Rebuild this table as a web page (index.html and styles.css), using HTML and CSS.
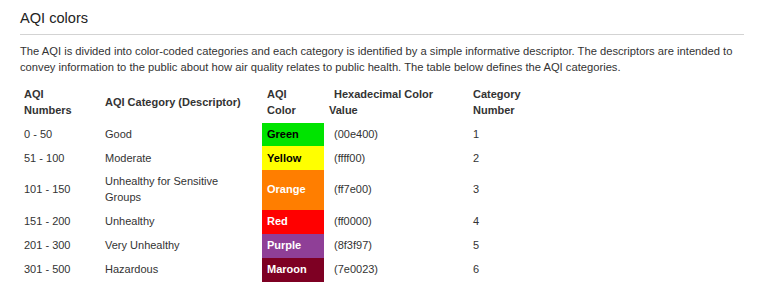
FILE: index.html
```html
<!DOCTYPE html>
<html lang="en">
<head>
<meta charset="utf-8">
<title>AQI colors</title>
<link rel="stylesheet" href="styles.css">
</head>
<body>
<section class="aqi">
  <h2 class="aqi-title">AQI colors</h2>
  <p class="aqi-intro">The AQI is divided into color-coded categories and each category is identified by a simple informative descriptor. The descriptors are intended to convey information to the public about how air quality relates to public health. The table below defines the AQI categories.</p>
  <table class="aqi-table">
    <colgroup>
      <col class="c-num">
      <col class="c-cat">
      <col class="c-color">
      <col class="c-hex">
      <col class="c-idx">
    </colgroup>
    <thead>
      <tr>
        <th>AQI<br>Numbers</th>
        <th>AQI Category (Descriptor)</th>
        <th>AQI<br>Color</th>
        <th class="hex">Hexadecimal Color Value</th>
        <th>Category Number</th>
      </tr>
    </thead>
    <tbody>
      <tr>
        <td>0 - 50</td><td>Good</td><td class="sw green">Green</td><td class="hex">(00e400)</td><td>1</td>
      </tr>
      <tr>
        <td>51 - 100</td><td>Moderate</td><td class="sw yellow">Yellow</td><td class="hex">(ffff00)</td><td>2</td>
      </tr>
      <tr>
        <td>101 - 150</td><td>Unhealthy for Sensitive Groups</td><td class="sw orange">Orange</td><td class="hex">(ff7e00)</td><td>3</td>
      </tr>
      <tr>
        <td>151 - 200</td><td>Unhealthy</td><td class="sw red">Red</td><td class="hex">(ff0000)</td><td>4</td>
      </tr>
      <tr>
        <td>201 - 300</td><td>Very Unhealthy</td><td class="sw purple">Purple</td><td class="hex">(8f3f97)</td><td>5</td>
      </tr>
      <tr>
        <td>301 - 500</td><td>Hazardous</td><td class="sw maroon">Maroon</td><td class="hex">(7e0023)</td><td>6</td>
      </tr>
    </tbody>
  </table>
</section>
</body>
</html>
```
FILE: styles.css
```css
html, body {
  margin: 0;
  padding: 0;
  background: #ffffff;
}
body {
  font-family: "Liberation Sans", Arial, sans-serif;
  color: #333333;
}
.aqi {
  width: 724px;
  padding: 8px 24px 0 20px;
}
.aqi-title {
  margin: 0;
  font-size: 14.6px;
  line-height: 20px;
  font-weight: normal;
  color: #222222;
  padding-bottom: 6px;
  border-bottom: 1px solid #d3d3d3;
}
.aqi-intro {
  margin: 9px 0 0;
  font-size: 11.2px;
  line-height: 15.5px;
  color: #333333;
}
.aqi-table {
  margin: 8px 0 0 -1px;
  border-collapse: collapse;
  font-size: 11px;
  line-height: 15.7px;
  table-layout: fixed;
  width: 521px;
}
.c-num { width: 81px; }
.c-cat { width: 162px; }
.c-color { width: 62px; }
.c-hex { width: 144px; }
.c-idx { width: 72px; }
.aqi-table th,
.aqi-table td {
  padding: 4.1px 5px;
  text-align: left;
  vertical-align: middle;
  color: #333333;
}
.aqi-table th {
  font-weight: bold;
}
.aqi-table .hex {
  text-indent: 5px;
}
.aqi-table .sw {
  font-weight: bold;
  color: #ffffff;
}
.aqi-table .green { background: #00e400; color: #000000; }
.aqi-table .yellow { background: #ffff00; color: #000000; }
.aqi-table .orange { background: #ff7e00; }
.aqi-table .red { background: #ff0000; }
.aqi-table .purple { background: #8f3f97; }
.aqi-table .maroon { background: #7e0023; }
```
